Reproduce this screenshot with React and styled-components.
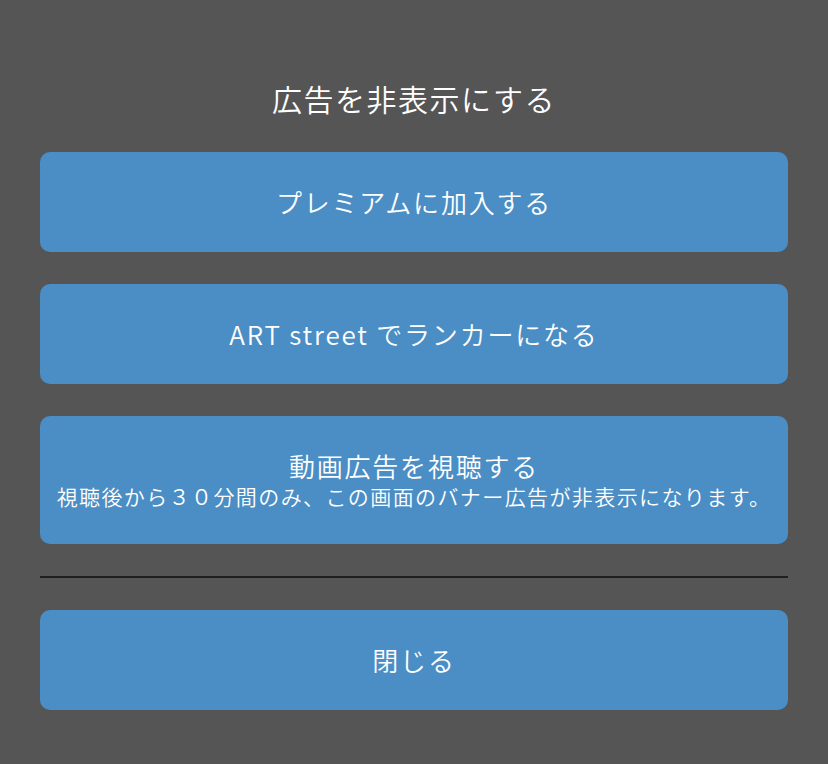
import React from "react";
import styled, { createGlobalStyle } from "styled-components";

// ---------- ESTILOS ----------
const GlobalStyle = createGlobalStyle`
  html, body {
    margin: 0;
    padding: 0;
    background-color: #555555;
  }
  body {
    font-family: "Noto Sans CJK JP", "Noto Sans", sans-serif;
    color: #ffffff;
  }
`;

const Sheet = styled.div`
  min-height: 764px;
  padding: 80px 40px 0;
  box-sizing: border-box;
  display: flex;
  flex-direction: column;
`;

const Title = styled.h1`
  margin: 0 0 36px;
  font-size: 30px;
  font-weight: 350;
  line-height: 36px;
  letter-spacing: 1.5px;
  text-align: center;
  color: #ffffff;
`;

const ButtonList = styled.div`
  display: flex;
  flex-direction: column;
  gap: 32px;
`;

const ActionButton = styled.button`
  height: ${(props) => (props.tall ? "128px" : "100px")};
  width: 100%;
  border: none;
  border-radius: 10px;
  background-color: #4a8ec5;
  color: #ffffff;
  font-family: inherit;
  display: flex;
  flex-direction: column;
  align-items: center;
  justify-content: center;
  padding: 0;
  cursor: pointer;
`;

const Label = styled.span`
  font-size: 26px;
  line-height: 32px;
  letter-spacing: 1.8px;
  font-weight: 350;
`;

const Note = styled.span`
  font-size: 21px;
  line-height: 29px;
  letter-spacing: 1.4px;
  font-weight: 350;
`;

const Divider = styled.hr`
  margin: 0;
  border: none;
  height: 2px;
  background-color: #1f1f1f;
`;

const App = () => (
  <>
    <GlobalStyle />
    <Sheet>
      <Title>広告を非表示にする</Title>
      <ButtonList>
        <ActionButton>
          <Label>プレミアムに加入する</Label>
        </ActionButton>
        <ActionButton>
          <Label>ART street でランカーになる</Label>
        </ActionButton>
        <ActionButton tall>
          <Label>動画広告を視聴する</Label>
          <Note>視聴後から３０分間のみ、この画面のバナー広告が非表示になります。</Note>
        </ActionButton>
        <Divider />
        <ActionButton>
          <Label>閉じる</Label>
        </ActionButton>
      </ButtonList>
    </Sheet>
  </>
);

export default App;
